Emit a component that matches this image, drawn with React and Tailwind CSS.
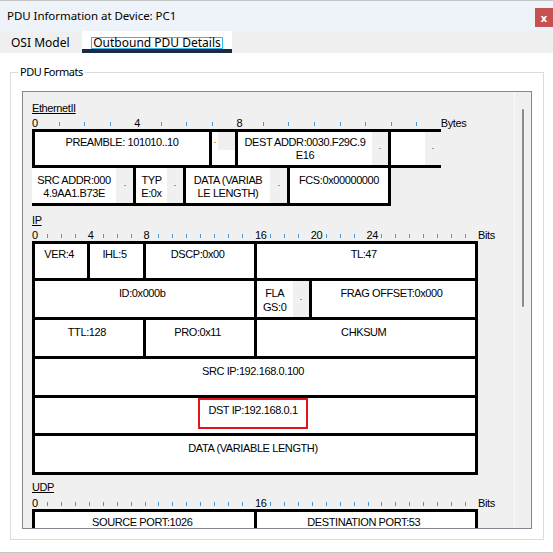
import React from 'react';

// bit / byte rulers above each header diagram
function Ruler({ count, unit, labels, end }) {
  return (
    <div className="flex h-[12px] leading-[12px]">
      {Array.from({ length: count }).map((_, i) => (
        <div key={i} className={`${unit} shrink-0 flex`}>
          {labels[i] ? (
            <span>{labels[i]}</span>
          ) : (
            <span className="ml-px mt-[5px] h-[4px] w-px bg-[#3d9be9]" />
          )}
        </div>
      ))}
      <span className="shrink-0">{end}</span>
    </div>
  );
}

// grey scrollbar stub at the right of a text field
function Strip({ w = 'w-[16px]' }) {
  return (
    <div className={`${w} shrink-0 bg-[#f0f0f0] flex items-center justify-center`}>
      <span className="h-px w-[2px] bg-[#a0a0a0]" />
    </div>
  );
}

function Cell({ span, top = 'pt-[5px]', children }) {
  return (
    <div className={`${span} ${top} bg-white text-center pr-[4px] whitespace-nowrap leading-[14px]`}>
      {children}
    </div>
  );
}

function Label({ children }) {
  return <div className="h-[13px] leading-[13px] underline">{children}</div>;
}

function Ethernet() {
  return (
    <div>
      <Label>EthernetII</Label>
      <div className="mt-[2px]">
        <Ruler count={16} unit="w-[25.56px]" labels={{ 0: '0', 4: '4', 8: '8' }} end="Bytes" />
      </div>

      {/* row 1 */}
      <div className="flex h-[39px] w-[409px] border-y-[3px] border-l-[3px] border-black leading-[13px]">
        <div className="w-[177px] shrink-0 border-r-[3px] border-black bg-white pt-[4px] text-center">
          PREAMBLE: 101010..10
        </div>
        <div className="w-[26px] shrink-0 border-r-[3px] border-black bg-white flex">
          <div className="w-[6px] shrink-0 flex items-start justify-center pt-[10px]">
            <span className="h-px w-[2px] bg-[#e8a040]" />
          </div>
          <div className="flex-1 flex flex-col">
            <div className="h-[18px] bg-[#f0f0f0]" />
          </div>
        </div>
        <div className="w-[153px] shrink-0 border-r-[3px] border-black bg-white flex">
          <div className="flex-1 pt-[4px] text-center whitespace-nowrap">
            DEST ADDR:0030.F29C.9
            <br />
            E16
          </div>
          <Strip />
        </div>
        <div className="w-[50px] shrink-0 bg-white flex">
          <div className="flex-1" />
          <Strip />
        </div>
      </div>

      {/* row 2 */}
      <div className="flex h-[38px] w-[359px] border-b-[3px] border-black leading-[13px]">
        <div className="w-[104px] shrink-0 border-r-[3px] border-black bg-white flex">
          <div className="flex-1 pt-[6px] text-center whitespace-nowrap">
            SRC ADDR:000
            <br />
            4.9AA1.B73E
          </div>
          <Strip w="w-[17px]" />
        </div>
        <div className="w-[50px] shrink-0 border-r-[3px] border-black bg-white flex">
          <div className="flex-1 pt-[6px] text-center whitespace-nowrap">
            TYP
            <br />
            E:0x
          </div>
          <Strip />
        </div>
        <div className="w-[104px] shrink-0 border-r-[3px] border-black bg-white flex">
          <div className="flex-1 pt-[6px] text-center whitespace-nowrap">
            DATA (VARIAB
            <br />
            LE LENGTH)
          </div>
          <Strip w="w-[17px]" />
        </div>
        <div className="w-[101px] shrink-0 border-r-[3px] border-black bg-white pt-[6px] text-center">
          FCS:0x00000000
        </div>
      </div>
    </div>
  );
}

function IP() {
  return (
    <div className="mt-[8px]">
      <Label>IP</Label>
      <div className="mt-[2px]">
        <Ruler
          count={32}
          unit="w-[13.94px]"
          labels={{ 0: '0', 4: '4', 8: '8', 16: '16', 20: '20', 24: '24' }}
          end="Bits"
        />
      </div>
      <div className="grid w-[446px] grid-cols-[repeat(32,minmax(0,1fr))] grid-rows-[34px_36px_36px_36px_35px_36px] gap-[3px] bg-black p-[3px]">
        <Cell span="col-span-4" top="pt-[3px]">VER:4</Cell>
        <Cell span="col-span-4" top="pt-[3px]">IHL:5</Cell>
        <Cell span="col-span-8" top="pt-[3px]">DSCP:0x00</Cell>
        <Cell span="col-span-16" top="pt-[3px]">TL:47</Cell>

        <Cell span="col-span-16">ID:0x000b</Cell>
        <div className="col-span-4 bg-white flex">
          <div className="flex-1 pt-[5px] text-center leading-[14px]">
            FLA
            <br />
            GS:0
          </div>
          <Strip />
        </div>
        <Cell span="col-span-12">FRAG OFFSET:0x000</Cell>

        <Cell span="col-span-8">TTL:128</Cell>
        <Cell span="col-span-8">PRO:0x11</Cell>
        <Cell span="col-span-16">CHKSUM</Cell>

        <Cell span="col-span-32">SRC IP:192.168.0.100</Cell>

        <div className="col-span-32 bg-white flex justify-center pr-[4px]">
          <div className="h-[31px] w-[110px] border-2 border-[#e3141c] pt-[3px] text-center leading-[14px] whitespace-nowrap">
            DST IP:192.168.0.1
          </div>
        </div>

        <Cell span="col-span-32">DATA (VARIABLE LENGTH)</Cell>
      </div>
    </div>
  );
}

function UDP() {
  return (
    <div className="mt-[6px]">
      <Label>UDP</Label>
      <div className="mt-[3px]">
        <Ruler count={32} unit="w-[13.94px]" labels={{ 0: '0', 16: '16' }} end="Bits" />
      </div>
      <div className="grid w-[446px] grid-cols-[repeat(32,minmax(0,1fr))] grid-rows-[36px] gap-[3px] bg-black p-[3px]">
        <Cell span="col-span-16" top="pt-[3px]">SOURCE PORT:1026</Cell>
        <Cell span="col-span-16" top="pt-[3px]">DESTINATION PORT:53</Cell>
      </div>
    </div>
  );
}

export default function App() {
  return (
    <div className="w-[553px] h-[553px] overflow-hidden bg-white border-y border-[#c4c4c4] flex flex-col font-['Noto_Sans',sans-serif] text-black">
      {/* title bar */}
      <div className="h-[30px] shrink-0 bg-[#eef3f9] flex items-start justify-between">
        <span className="pl-[7px] pt-[7px] text-[11.5px] leading-[16px] tracking-[-0.05px]">
          PDU Information at Device: PC1
        </span>
        <button className="mt-[7px] h-[19px] w-[18px] bg-[#c75050] text-white text-[11px] font-bold leading-none flex items-center justify-center">
          x
        </button>
      </div>

      {/* tabs */}
      <div className="h-[22px] shrink-0 bg-[#f0f0f0] flex text-[12px]">
        <span className="pl-[11px] pt-[4px] leading-[16px] w-[82px] shrink-0">OSI Model</span>
        <div className="w-[150px] shrink-0 flex flex-col">
          <div className="h-[18px] bg-white flex justify-center pt-[6px]">
            <span className="h-[12px] border border-[#3cb6e6] px-[1px] leading-[10px]">
              Outbound PDU Details
            </span>
          </div>
          <div className="h-[4px] bg-[#172a48]" />
        </div>
      </div>

      {/* content */}
      <div className="flex-1 bg-white">
        <fieldset className="mt-[11px] ml-[10px] h-[476px] w-[534px] border border-[#dcdcdc]">
          <legend className="ml-[7px] px-[2px] text-[11px] leading-[16px] tracking-[-0.5px]">PDU Formats</legend>
          <div className="mt-[11px] ml-[11px] h-[438px] w-[510px] border border-[#828790] bg-[#f0f0f0] flex">
            <div className="flex-1 overflow-hidden pl-[9px] pt-[10px] font-['Liberation_Sans',Arial,sans-serif] text-[11px] tracking-[-0.4px]">
              <Ethernet />
              <IP />
              <UDP />
            </div>
            <div className="w-[17px] shrink-0 border-l border-[#fbfbfb] flex justify-center pt-[17px]">
              <div className="h-[198px] w-[2px] rounded-full bg-[#8c8c8c]" />
            </div>
          </div>
        </fieldset>
      </div>
    </div>
  );
}
